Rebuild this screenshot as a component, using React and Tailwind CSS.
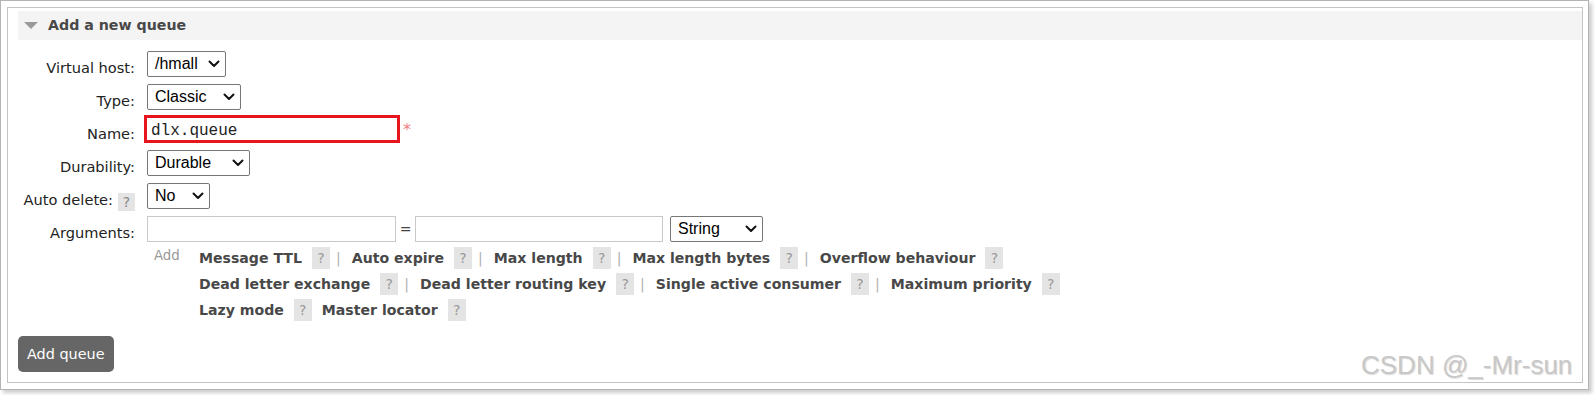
import React from "react";

const Chevron = () => (
  <svg width="12" height="8" viewBox="0 0 12 8" className="shrink-0">
    <path d="M1.5 1.5 L6 6 L10.5 1.5" fill="none" stroke="#111" strokeWidth="2" strokeLinecap="round" strokeLinejoin="round" />
  </svg>
);

function Select({ value, w }) {
  return (
    <div className={`flex h-[26px] items-center justify-between rounded-[2px] border border-[#767676] bg-white pl-[7px] pr-[5px] ${w}`}>
      <span className="font-['Liberation_Sans',Arial,sans-serif] text-[16px] leading-[20px] text-black">{value}</span>
      <Chevron />
    </div>
  );
}

function Label({ children, help }) {
  return (
    <div className="flex w-[117px] shrink-0 items-start justify-end">
      <span className="whitespace-nowrap pt-[8px] text-[14.6px] leading-[17px] text-[#222]">{children}</span>
      {help && (
        <span className="ml-[5px] mt-[10px] h-[18px] w-[17px] shrink-0 bg-[#e4e4e4] text-center text-[14px] leading-[18px] text-[#888]">?</span>
      )}
    </div>
  );
}

function Help() {
  return (
    <span className="ml-[10px] h-[22px] w-[18px] shrink-0 bg-[#e4e4e4] text-center text-[14px] font-normal leading-[22px] text-[#999]">?</span>
  );
}

function Sep() {
  return <span className="ml-[6px] mr-[11px] font-normal text-[#b0b0b0]">|</span>;
}

const argRows = [
  { items: ["Message TTL", "Auto expire", "Max length", "Max length bytes", "Overflow behaviour"], sep: true },
  { items: ["Dead letter exchange", "Dead letter routing key", "Single active consumer", "Maximum priority"], sep: true },
  { items: ["Lazy mode", "Master locator"], sep: false },
];

export default function App() {
  return (
    <div className="relative h-[395px] w-[1595px] overflow-hidden bg-white font-['DejaVu_Sans',Verdana,sans-serif]">
      <div className="h-[390px] w-[1589px] border border-[#b4b4b4] pb-[6px] pl-[6px] pr-[5px] pt-[6px] shadow-[3px_3px_4px_rgba(0,0,0,0.2)]">
        <div className="h-full border border-[#c4c4c4] pl-[10px]">
          <div className="mt-[3px] flex h-[29px] items-center bg-[#f4f4f4] pl-[6px]">
            <svg width="14" height="8" viewBox="0 0 14 8">
              <polygon points="0,0 14,0 7,7" fill="#9a9a9a" />
            </svg>
            <span className="ml-[10px] text-[14.2px] font-bold leading-[29px] text-[#484848]">Add a new queue</span>
          </div>

          <div className="mt-[11px] flex flex-col gap-[7px]">
            <div className="flex h-[26px] items-start gap-[12px]">
              <Label>Virtual host:</Label>
              <Select value="/hmall" w="w-[79px]" />
            </div>
            <div className="flex h-[26px] items-start gap-[12px]">
              <Label>Type:</Label>
              <Select value="Classic" w="w-[94px]" />
            </div>
            <div className="flex h-[26px] items-start gap-[12px]">
              <Label>Name:</Label>
              <div className="flex items-start">
                <div className="-ml-[3px] -mt-[2px] h-[28px] w-[256px] border-[3px] border-[#e8141e] bg-white pl-[4px]">
                  <span className="font-['Liberation_Mono','Courier_New',monospace] text-[16px] leading-[22px] text-[#222]">dlx.queue</span>
                </div>
                <span className="ml-[3px] text-[16px] leading-[26px] text-[#f08080]">*</span>
              </div>
            </div>
            <div className="flex h-[26px] items-start gap-[12px]">
              <Label>Durability:</Label>
              <Select value="Durable" w="w-[103px]" />
            </div>
            <div className="flex h-[26px] items-start gap-[12px]">
              <Label help>Auto delete:</Label>
              <Select value="No" w="w-[63px]" />
            </div>
            <div className="flex items-start gap-[12px]">
              <Label>Arguments:</Label>
              <div className="flex flex-col">
                <div className="flex h-[26px] items-start">
                  <div className="h-[26px] w-[249px] border border-[#c8c8c8] bg-white" />
                  <span className="w-[19px] text-center text-[14px] leading-[26px] text-[#444]">=</span>
                  <div className="h-[26px] w-[248px] border border-[#c8c8c8] bg-white" />
                  <div className="ml-[7px]">
                    <Select value="String" w="w-[93px]" />
                  </div>
                </div>
                <div className="mt-[5px] flex items-start">
                  <span className="w-[52px] shrink-0 pl-[7px] text-[13.3px] leading-[17px] text-[#999]">Add</span>
                  <div className="flex flex-col gap-[4px]">
                    {argRows.map((row, ri) => (
                      <div key={ri} className="flex h-[22px] items-start whitespace-nowrap text-[14.1px] font-bold leading-[22px] text-[#484848]">
                        {row.items.map((it, i) => (
                          <React.Fragment key={it}>
                            <span>{it}</span>
                            <Help />
                            {i < row.items.length - 1 && (row.sep ? <Sep /> : <span className="w-[10px]" />)}
                          </React.Fragment>
                        ))}
                      </div>
                    ))}
                  </div>
                </div>
              </div>
            </div>
          </div>

          <button className="mt-[15px] h-[36px] rounded-[5px] bg-[#666] px-[9px] text-[14.4px] leading-[36px] text-white">
            Add queue
          </button>
        </div>
      </div>
      <div className="absolute left-[1361px] top-[350px] font-['Liberation_Sans',Arial,sans-serif] text-[26px] leading-[30px] text-[#c8c8c8] [text-shadow:1px_1px_1px_rgba(0,0,0,0.15)]">
        CSDN @_-Mr-sun
      </div>
    </div>
  );
}
